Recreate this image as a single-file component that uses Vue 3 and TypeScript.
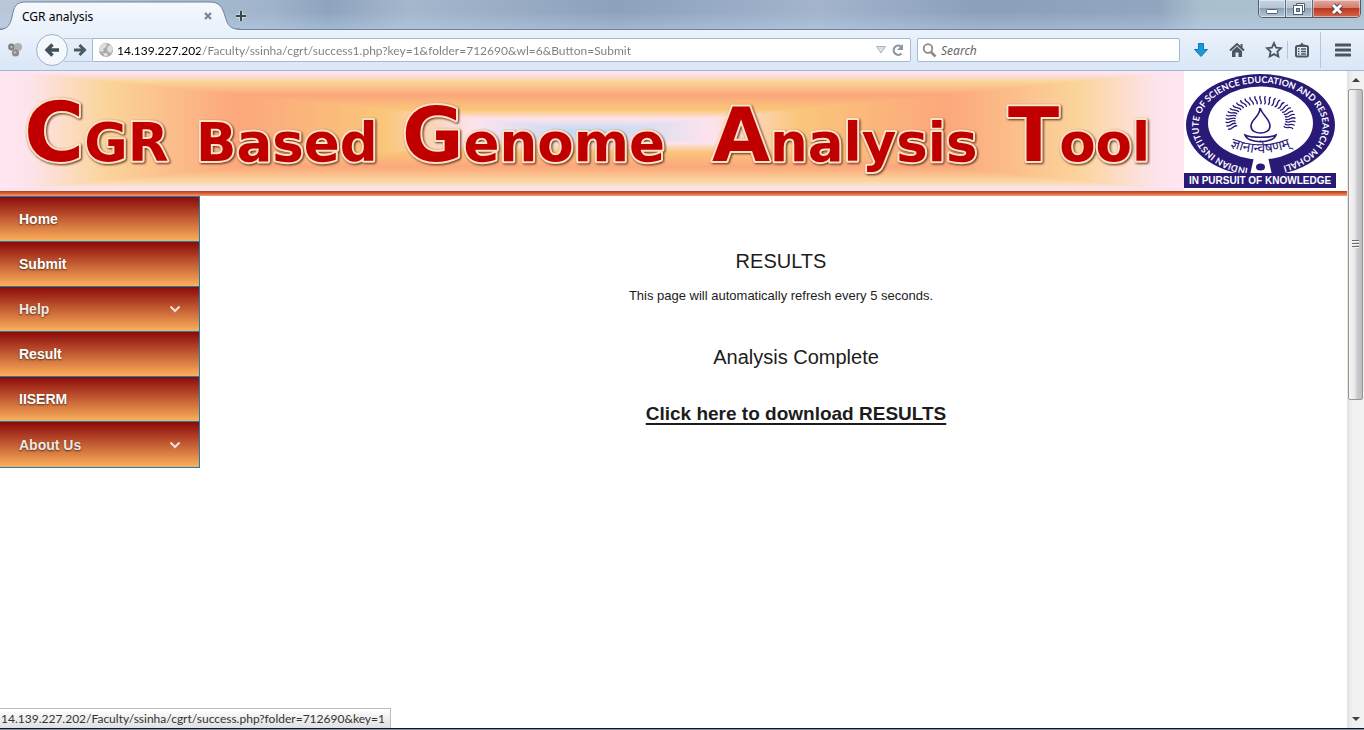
<script setup lang="ts">
import { ref } from 'vue'

interface MenuItem {
  label: string
  expandable: boolean
}

interface TitleWord {
  x: number
  lead: string
  leadSize: number
  rest: string
}

const menu: MenuItem[] = [
  { label: 'Home', expandable: false },
  { label: 'Submit', expandable: false },
  { label: 'Help', expandable: true },
  { label: 'Result', expandable: false },
  { label: 'IISERM', expandable: false },
  { label: 'About Us', expandable: true },
]

const titleWords: TitleWord[] = [
  { x: 24, lead: 'C', leadSize: 82, rest: 'GR' },
  { x: 196, lead: '', leadSize: 75, rest: 'Based' },
  { x: 402, lead: 'G', leadSize: 75, rest: 'enome' },
  { x: 712, lead: 'A', leadSize: 75, rest: 'nalysis' },
  { x: 1008, lead: 'T', leadSize: 75, rest: 'ool' },
]

const address = ref('14.139.227.202/Faculty/ssinha/cgrt/success1.php?key=1&folder=712690&wl=6&Button=Submit')
const query = ref('')

// Wavy rays fanned round the lamp of the emblem
const rays: string[] = Array.from({ length: 27 }, (_, i) => {
  const angle = ((158 + (i * 224) / 26) * Math.PI) / 180
  const c = Math.cos(angle)
  const s = Math.sin(angle)
  const point = (k: number, side: number) =>
    `${(76.5 + c * (25 + 10 * k) - s * side).toFixed(1)} ${(49 + s * (16 + 8 * k) + c * side).toFixed(1)}`
  return `M${point(0, 0)}C${point(0.3, 3)} ${point(0.7, -3)} ${point(1, 0)}`
})
</script>

<template>
  <div class="window">
    <header class="tabs">
      <div class="tab">
        <svg class="tab-shape" viewBox="0 0 240 30" width="240" height="30" aria-hidden="true">
          <defs>
            <linearGradient id="tabFill" x1="0" y1="0" x2="0" y2="1">
              <stop offset="0" stop-color="#f6f9fd" />
              <stop offset="1" stop-color="#e9f1fb" />
            </linearGradient>
          </defs>
          <path d="M0 30C8 29 10 25 12 17C14 6 16 2 26 2H209C220 2 222 7 225 16C228 26 230 29 240 30Z" fill="url(#tabFill)" />
          <path d="M0 29C8 29 10 25 12 17C14 6 16 2 26 2H209C220 2 222 7 225 16C228 26 230 29 240 29" fill="none" stroke="#71839b" />
        </svg>
        <span class="tab-title">CGR analysis</span>
        <button class="tab-close" aria-label="Close tab">
          <svg viewBox="0 0 8 8" width="8" height="8"><path d="M1 1L7 7M7 1L1 7" stroke="#76828f" stroke-width="2.2" /></svg>
        </button>
      </div>
      <button class="new-tab" aria-label="New tab">
        <svg viewBox="0 0 12 12" width="12" height="12"><path d="M6 1V11M1 6H11" stroke="#f0f4f8" stroke-width="4" opacity=".5" /><path d="M6 1V11M1 6H11" stroke="#3d454d" stroke-width="2" /></svg>
      </button>
      <div class="window-buttons">
        <button class="win" aria-label="Minimize">
          <svg viewBox="0 0 14 12" width="14" height="12"><rect x="1.5" y="6.5" width="11" height="4" rx="1" fill="#fff" stroke="#535f70" /></svg>
        </button>
        <button class="win" aria-label="Restore">
          <svg viewBox="0 0 14 14" width="14" height="14"><path d="M4.500 1.500H12.500V9.500H10.500V3.500H4.500Z" fill="#fff" stroke="#535f70" /><rect x="1.500" y="3.500" width="9" height="9" fill="#fff" stroke="#535f70" /><rect x="4.500" y="6.500" width="3" height="3" fill="#8fa1b5" stroke="#535f70" /></svg>
        </button>
        <button class="win close" aria-label="Close">
          <svg viewBox="0 0 14 12" width="14" height="12"><path d="M3 2L11 10M11 2L3 10" stroke="#58424a" stroke-width="5" /><path d="M3 2L11 10M11 2L3 10" stroke="#fff" stroke-width="3" /></svg>
        </button>
      </div>
    </header>

    <nav class="toolbar" aria-label="Browser toolbar">
      <button class="addon" aria-label="Add-on">
        <svg viewBox="0 0 16 16" width="16" height="16"><circle cx="4.500" cy="5" r="3.400" fill="#808080" /><circle cx="11" cy="5" r="4" fill="#b0b0b0" /><circle cx="8.500" cy="11" r="3.600" fill="#8b8b8b" /><circle cx="4.500" cy="5" r="1.200" fill="#b9b9b9" /><circle cx="8" cy="10.500" r="1.300" fill="#bcbcbc" /></svg>
      </button>
      <button class="back" aria-label="Back">
        <svg viewBox="0 0 16 16" width="16" height="16"><path d="M8.500 2.500L3 8L8.500 13.500M3 8H15" fill="none" stroke="#434f5a" stroke-width="3.400" /></svg>
      </button>
      <button class="forward" aria-label="Forward">
        <svg viewBox="0 0 14 14" width="14" height="14"><path d="M6.500 2L11.500 7L6.500 12M1 7H11" fill="none" stroke="#4c5966" stroke-width="3" /></svg>
      </button>
      <div class="address">
        <svg viewBox="0 0 16 16" width="16" height="16" aria-hidden="true"><circle cx="8" cy="8" r="7" fill="#a9a9a9" /><path d="M2 5C4 1 8 1 9 2L8 5L5 7L6 9L3 10L1 8ZM10 4L13 3L15 7L13 11L10 10L9 7ZM5 11L9 11L10 13L7 15Z" fill="#dedede" /></svg>
        <input v-model="address" class="url" type="text" aria-label="Address" />
        <button class="drop" aria-label="Show history">
          <svg viewBox="0 0 10 8" width="10" height="8"><path d="M.5 .5H9.500L5 7Z" fill="#dbe1e8" stroke="#a9b4c1" /></svg>
        </button>
        <button class="reload" aria-label="Reload">
          <svg viewBox="0 0 14 14" width="14" height="14"><path d="M10.500 10.500A4.600 4.600 0 1 1 10 3.500" fill="none" stroke="#8b98a7" stroke-width="2.200" /><path d="M12 1V7H6Z" fill="#8b98a7" /></svg>
        </button>
      </div>
      <label class="search">
        <svg viewBox="0 0 15 15" width="15" height="15" aria-hidden="true"><circle cx="6" cy="5.500" r="4.300" fill="none" stroke="#8b8b8b" stroke-width="1.800" /><path d="M9 9L13.500 13.500" stroke="#8b8b8b" stroke-width="2.600" /></svg>
        <input v-model="query" type="search" placeholder="Search" aria-label="Search" />
      </label>
      <div class="tools">
        <button aria-label="Downloads">
          <svg viewBox="0 0 16 16" width="16" height="16"><path d="M5.500 1.500H10.500V7.500H14.500L8 14.500L1.500 7.500H5.500Z" fill="#1b98dc" stroke="#1277b4" /></svg>
        </button>
        <button aria-label="Home page">
          <svg viewBox="0 0 16 16" width="16" height="16"><path d="M1 8.500L8 2L15 8.500" fill="none" stroke="#4a5662" stroke-width="2" /><path d="M11.500 2H13.500V6H11.500ZM3 9L8 4.500L13 9V15H9.500V10.500H6.500V15H3Z" fill="#4a5662" /></svg>
        </button>
        <button aria-label="Bookmark this page">
          <svg viewBox="0 0 18 18" width="18" height="18"><path d="M9 2L11.100 6.600L16 7.200L12.400 10.600L13.400 15.600L9 13.100L4.600 15.600L5.600 10.600L2 7.200L6.900 6.600Z" fill="none" stroke="#4a5662" stroke-width="1.800" /></svg>
        </button>
        <button class="list" aria-label="Bookmarks">
          <svg viewBox="0 0 16 16" width="16" height="16"><path d="M5 4V2.500H6.500L8 .5L9.500 2.500H11V4Z" fill="#4a5662" /><rect x="2" y="4" width="12" height="10.500" rx="1.500" fill="none" stroke="#4a5662" stroke-width="2" /><path d="M4 7H5.500M7 7H12M4 9.500H5.500M7 9.500H12M4 12H5.500M7 12H12" stroke="#4a5662" stroke-width="1.300" /></svg>
        </button>
        <button class="menu-button" aria-label="Open menu">
          <svg viewBox="0 0 16 14" width="16" height="14"><path d="M1 2H15M1 7H15M1 12H15" stroke="#4a5662" stroke-width="3" stroke-linecap="round" /></svg>
        </button>
      </div>
    </nav>

    <div class="viewport">
      <div class="page">
        <div class="masthead">
          <div class="banner">
            <svg class="backdrop" viewBox="0 0 1184 120" preserveAspectRatio="none" aria-hidden="true">
              <defs>
                <linearGradient id="across" x1="0" y1="0" x2="1" y2="0">
                  <stop offset="0" stop-color="#ffe6f3" />
                  <stop offset=".025" stop-color="#fde3ea" />
                  <stop offset=".09" stop-color="#fbd49a" />
                  <stop offset=".2" stop-color="#fca77c" />
                  <stop offset=".325" stop-color="#fac67a" />
                  <stop offset=".4" stop-color="#fde3ee" />
                  <stop offset=".5" stop-color="#bfdaf3" />
                  <stop offset=".6" stop-color="#fde3ee" />
                  <stop offset=".675" stop-color="#fac67a" />
                  <stop offset=".8" stop-color="#fca77c" />
                  <stop offset=".91" stop-color="#fbd49a" />
                  <stop offset=".975" stop-color="#fde3ea" />
                  <stop offset="1" stop-color="#ffe6f3" />
                </linearGradient>
                <linearGradient id="down" href="#across" x1="0" y1="0" x2="0" y2="1" />
              </defs>
              <rect width="1184" height="120" fill="url(#across)" />
              <path d="M0 0H1184L592 60ZM0 120H1184L592 60Z" fill="url(#down)" />
            </svg>
            <svg class="wordmark" viewBox="0 0 1184 120" role="img" aria-label="CGR Based Genome Analysis Tool">
              <text v-for="word in titleWords" :key="word.x" :x="word.x" y="90">
                <tspan :font-size="word.leadSize">{{ word.lead }}</tspan>{{ word.rest }}
              </text>
            </svg>
          </div>
          <svg class="emblem" viewBox="0 0 153 120" width="153" height="120" role="img" aria-label="Indian Institute of Science Education and Research Mohali">
            <defs>
              <path id="ringPath" d="M64 97A62 43 0 1 1 89 97" />
              <path id="mottoPath" d="M36 71Q76.500 93 117 71" />
            </defs>
            <ellipse cx="76.500" cy="54" rx="74.500" ry="51" fill="#2a1a78" />
            <ellipse cx="76.500" cy="52" rx="52.500" ry="36.500" fill="#fff" />
            <path d="M70 86H84L88 104H66Z" fill="#fff" />
            <ellipse cx="76.500" cy="96" rx="4.500" ry="3.500" fill="#2a1a78" />
            <text class="ring-text"><textPath href="#ringPath">INDIAN INSTITUTE OF SCIENCE EDUCATION AND RESEARCH MOHALI</textPath></text>
            <path v-for="ray in rays" :key="ray" :d="ray" fill="none" stroke="#2a1a78" stroke-width="1.300" />
            <path d="M76 37C79 45 86 48 86 55C86 60 81 62 76.500 62C72 62 67 60 67 55C67 48 76 46 76 37Z" fill="none" stroke="#2a1a78" stroke-width="1.600" />
            <path d="M61 64C67 67 86 67 92 64C89 73 64 73 61 64Z" fill="#fff" stroke="#2a1a78" stroke-width="1.600" />
            <text class="motto-hindi"><textPath href="#mottoPath" startOffset="50%">ज्ञानान्वेषणम्</textPath></text>
            <rect y="102" width="152" height="15" fill="#2a1a78" />
            <text class="motto" x="76" y="113">IN PURSUIT OF KNOWLEDGE</text>
          </svg>
        </div>

        <div class="columns">
          <nav class="side" aria-label="Site">
            <a v-for="item in menu" :key="item.label" href="#" :class="{ dim: item.expandable }">
              <span>{{ item.label }}</span>
              <svg v-if="item.expandable" viewBox="0 0 12 8" width="12" height="8" aria-hidden="true"><path d="M1.500 1.500L6 6L10.500 1.500" fill="none" stroke="#f0e0dc" stroke-width="2" /></svg>
            </a>
          </nav>
          <main class="content">
            <h2>RESULTS</h2>
            <p>This page will automatically refresh every 5 seconds.</p>
            <section class="done">
              <h2>Analysis Complete</h2>
              <a href="#">Click here to download RESULTS</a>
            </section>
          </main>
        </div>
      </div>

      <div class="scrollbar" aria-hidden="true">
        <svg viewBox="0 0 8 4" width="8" height="4"><path d="M0 4L4 0L8 4Z" fill="#404040" /></svg>
        <div class="track"><div class="thumb"><i></i><i></i><i></i></div></div>
        <svg viewBox="0 0 8 4" width="8" height="4"><path d="M0 0L4 4L8 0Z" fill="#404040" /></svg>
      </div>
      <div class="status">14.139.227.202/Faculty/ssinha/cgrt/success.php?folder=712690&amp;key=1</div>
    </div>
    <div class="desktop-edge"></div>
  </div>
</template>

<style>
body {
  margin: 0;
}
</style>

<style scoped>
.window {
  display: flex;
  flex-direction: column;
  height: 100vh;
  overflow: hidden;
  font-family: "Noto Sans", "Open Sans", sans-serif;
  font-size: 12px;
  color: #000;
}
.window *,
.window {
  box-sizing: border-box;
}
button {
  display: flex;
  align-items: center;
  justify-content: center;
  padding: 0;
  border: 0;
  background: none;
}
svg {
  display: block;
  flex: none;
}
.tabs {
  display: flex;
  align-items: flex-start;
  height: 30px;
  background:
    linear-gradient(to bottom, transparent 40%, rgba(190, 212, 238, 0.4)),
    linear-gradient(to right, #b9c8d9, #9fb4ca 20%, #8ea3bd 24%, #a5b7cd 30%, #8da1bb 45%, #a3b4cc 60%, #8b9fba 72%, #92a6c0 85%, #aabfce 88%, #adc3d0);
  border-bottom: 1px solid #71839b;
}
.tab {
  position: relative;
  display: flex;
  align-items: center;
  width: 232px;
  height: 30px;
  padding: 2px 19px 0 22px;
}
.tab-shape {
  position: absolute;
  left: 0;
  top: 0;
}
.tab-title {
  position: relative;
  flex: 1;
}
.tab-close {
  position: relative;
  width: 10px;
  height: 16px;
}
.new-tab {
  width: 18px;
  height: 32px;
}
.window-buttons {
  display: flex;
  height: 18px;
  margin-left: auto;
  margin-right: 3px;
  border: 1px solid #4e5d6d;
  border-top: 0;
  border-radius: 0 0 5px 5px;
  overflow: hidden;
}
.win {
  width: 27px;
  background: linear-gradient(#c6d3e0, #b6c5d4 45%, #8ea2b7 50%, #b4c8d8);
  border-right: 1px solid #5b6a7c;
  box-shadow: inset 0 0 0 1px rgba(255, 255, 255, 0.45);
}
.close {
  width: 47px;
  border: 0;
  background: linear-gradient(#e3aaa0, #d27f70 45%, #bb3820 50%, #d6674a);
}
.toolbar {
  display: flex;
  align-items: center;
  height: 41px;
  flex: none;
  background: linear-gradient(#eaf2fb, #dae7f7);
  border-bottom: 1px solid #a0b6d2;
}
.addon {
  width: 16px;
  margin-left: 7px;
}
.back {
  width: 32px;
  height: 32px;
  margin-left: 13px;
  border: 1px solid #9fb1c7;
  border-radius: 50%;
  background: #f4f8fd;
  z-index: 1;
}
.forward {
  width: 28px;
  height: 24px;
  margin-left: -4px;
  padding-left: 4px;
  border: 1px solid #b7c8dc;
  border-width: 1px 0;
}
.address {
  display: flex;
  align-items: center;
  flex: 823;
  height: 24px;
  padding: 0 5px;
  border: 1px solid #a5b9d2;
  border-radius: 0 2px 2px 0;
  background: #fff;
}
input {
  min-width: 0;
  padding: 0;
  border: 0;
  outline: 0;
  font: inherit;
  background: none;
}
.url {
  flex: 1;
  margin-left: 3px;
  font-family: Lato, sans-serif;
  color: transparent;
  background: linear-gradient(to right, #000 83px, #7c7c7c 83px);
  background-clip: text;
  -webkit-background-clip: text;
}
.drop {
  margin-right: 5px;
}
.search {
  display: flex;
  align-items: center;
  gap: 4px;
  flex: 258;
  height: 24px;
  margin-left: 6px;
  padding: 0 4px;
  border: 1px solid #a5b9d2;
  border-radius: 2px;
  background: #fff;
}
.search input {
  flex: 1;
}
.search input::placeholder {
  color: #666;
  font-style: italic;
  opacity: 1;
}
.tools {
  display: flex;
  align-items: center;
  width: 184px;
  padding-left: 13px;
}
.tools button {
  width: 16px;
  margin-right: 20px;
}
.tools button:nth-child(3) {
  width: 18px;
  margin-right: 4px;
}
.tools .list {
  width: 28px;
  height: 18px;
  margin-right: 5px;
  border-left: 1px solid #b5c6dc;
}
.tools .menu-button {
  width: 44px;
  height: 36px;
  margin-right: 0;
  border-left: 1px solid #b5c6dc;
}
.viewport {
  position: relative;
  display: flex;
  flex: 1;
  min-height: 0;
  background: #fff;
}
.page {
  flex: 1;
  min-width: 0;
  font-family: "Liberation Sans", Arial, sans-serif;
  overflow: hidden;
}
.masthead {
  display: flex;
  height: 125px;
  padding: 0 10px 5px 0;
  background: linear-gradient(#b93c14, #dc6437 50%, #f09c7c) bottom / 100% 5px no-repeat;
}
.banner {
  position: relative;
  flex: 1;
}
.backdrop,
.wordmark {
  position: absolute;
  inset: 0;
  width: 100%;
  height: 100%;
}
.wordmark text {
  font-family: "DejaVu Sans", sans-serif;
  font-size: 53px;
  font-weight: 700;
  fill: #c00000;
  stroke: #fde2c4;
  stroke-width: 4px;
  stroke-linejoin: round;
  paint-order: stroke;
  filter: drop-shadow(1px 1px 1px #5c2c18);
}
.ring-text {
  font-family: Lato, sans-serif;
  font-size: 9px;
  font-weight: 700;
  fill: #fff;
}
.motto-hindi {
  font-family: "Noto Sans Devanagari", "Noto Sans", sans-serif;
  font-size: 14px;
  fill: #2a1a78;
  text-anchor: middle;
}
.motto {
  font-family: "Liberation Sans", Arial, sans-serif;
  font-size: 10px;
  font-weight: 700;
  fill: #fff;
  text-anchor: middle;
}
.columns {
  display: flex;
  align-items: flex-start;
}
.side {
  display: grid;
  grid-template-rows: repeat(6, 1fr);
  width: 200px;
  height: 272px;
  border: 1px solid #1b7fb0;
  border-left: 0;
}
.side a {
  display: flex;
  align-items: center;
  justify-content: space-between;
  padding: 0 18px 0 19px;
  border-bottom: 1px solid #1b7fb0;
  background: linear-gradient(#8b0a0a, #fcb05c);
  color: #fff;
  font-size: 14px;
  font-weight: 700;
  text-decoration: none;
  text-shadow: 0 1px 2px rgba(0, 0, 0, 0.6);
}
.side a:last-child {
  border-bottom: 0;
}
.side .dim {
  color: #f0e8e4;
}
.content {
  flex: 1;
  padding: 51px 0 0 15px;
  text-align: center;
  color: #1c1c1c;
}
h2 {
  margin: 0;
  font-size: 20px;
  font-weight: 400;
  line-height: 28px;
}
.content p {
  margin: 13px 0 0;
  font-size: 13px;
  line-height: 16px;
}
.done {
  display: flex;
  flex-direction: column;
  align-items: center;
  gap: 31px;
  margin-top: 39px;
  padding-left: 30px;
}
.done a {
  color: #1c1c1c;
  font-size: 19px;
  font-weight: 700;
  line-height: 24px;
  text-decoration-thickness: 2px;
  text-underline-offset: 3px;
}
.scrollbar {
  display: flex;
  flex-direction: column;
  align-items: center;
  gap: 7px;
  width: 17px;
  padding: 7px 0;
  background: linear-gradient(to right, #e3e3e3, #f0f0f0 30%, #f2f2f2);
}
.track {
  flex: 1;
  width: 15px;
}
.thumb {
  display: flex;
  flex-direction: column;
  align-items: center;
  justify-content: center;
  gap: 1px;
  height: 50%;
  border: 1px solid #979797;
  border-radius: 2px;
  background: linear-gradient(to right, #f5f5f5, #e9e9eb 45%, #cfcfd3 60%, #bbbbc0);
}
.thumb i {
  width: 7px;
  height: 2px;
  background: #6c6c6c;
  border-bottom: 1px solid #f4f4f4;
}
.status {
  position: absolute;
  left: 0;
  bottom: 0;
  height: 20px;
  padding: 0 5px 0 1px;
  border: 1px solid #bcbcbc;
  border-width: 1px 1px 0 0;
  background: linear-gradient(#fff, #e0e0e0);
  color: #333;
  font-family: Lato, sans-serif;
  line-height: 19px;
}
.desktop-edge {
  flex: none;
  height: 2px;
  border-top: 1px solid #10151e;
  background: #7c8da8;
}
</style>
